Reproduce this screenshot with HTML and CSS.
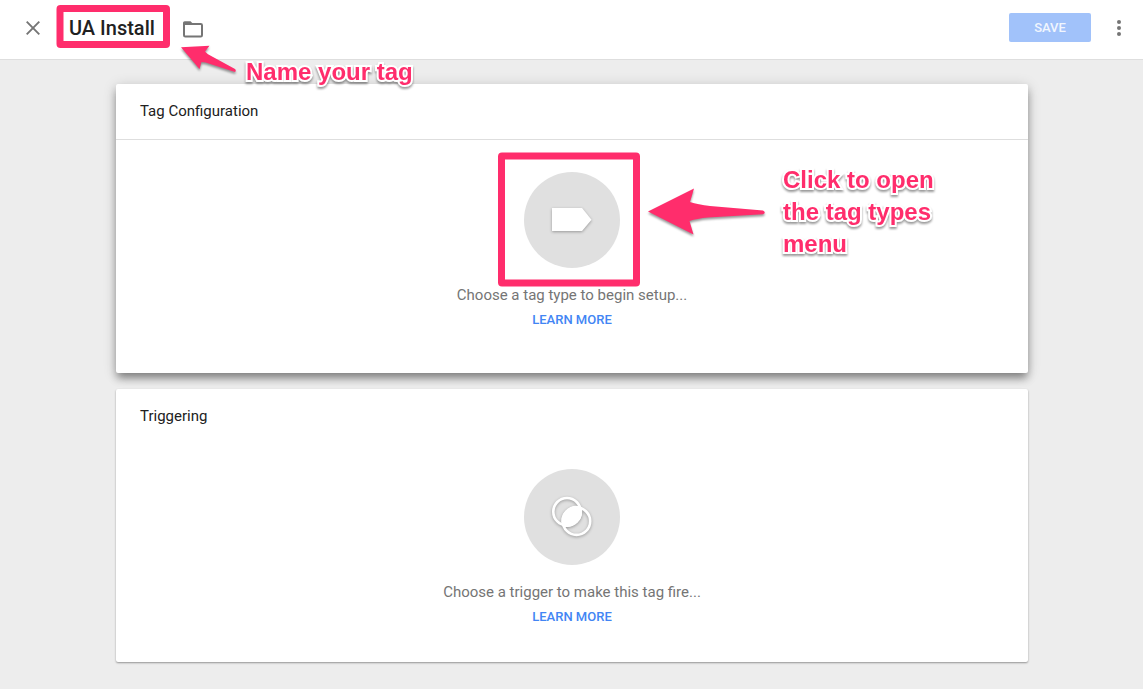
FILE: index.html
```html
<!DOCTYPE html>
<html lang="en">
<head>
<meta charset="utf-8">
<title>UA Install</title>
<link rel="stylesheet" href="styles.css">
</head>
<body>
<header class="topbar">
  <svg class="close" width="14" height="14" viewBox="0 0 14 14"><path d="M.7.7 13.3 13.3M13.3.7.7 13.3"/></svg>
  <h1 class="name">UA Install</h1>
  <svg class="folder" width="20" height="17" viewBox="0 0 20 17"><path class="folder-line" d="M1 2.9V14.2Q1 15.5 2.3 15.5H17.7Q19 15.5 19 14.2V4.3Q19 3 17.7 3H1"/><path class="folder-tab" d="M0 4V1.8Q0 .3 1.7.3H7.5L9.8 2.6V4Z"/></svg>
  <button class="save">SAVE</button>
  <svg class="more" width="4" height="16" viewBox="0 0 4 16"><circle cx="2" cy="2" r="2"/><circle cx="2" cy="8" r="2"/><circle cx="2" cy="14" r="2"/></svg>
</header>
<main class="content">
  <section class="card card-config">
    <h2 class="card-title card-title-ruled">Tag Configuration</h2>
    <div class="empty">
      <div class="disc"><svg class="glyph" width="40" height="24" viewBox="0 0 40 24"><path d="M0 0H30L39.500 11.700 30 23H0Z"/></svg></div>
      <p class="hint">Choose a tag type to begin setup...</p>
      <a class="learn">LEARN MORE</a>
    </div>
  </section>
  <section class="card card-trigger">
    <h2 class="card-title">Triggering</h2>
    <div class="empty empty-trigger">
      <div class="disc"><svg class="glyph" width="40" height="40" viewBox="0 0 40 40"><circle class="ring" cx="15" cy="14.700" r="13.700"/><circle class="ring" cx="24.500" cy="24.200" r="13.700"/><path d="M29.1 9.750A15 15 0 0 1 10.3 29.15A15 15 0 0 1 29.1 9.750Z"/></svg></div>
      <p class="hint">Choose a trigger to make this tag fire...</p>
      <a class="learn">LEARN MORE</a>
    </div>
  </section>
</main>
<svg class="marks" width="1143" height="689" viewBox="0 0 1143 689">
  <rect class="frame" x="60" y="8.5" width="106.500" height="36" rx=".5"/>
  <rect class="frame" x="501.500" y="156" width="135" height="127" rx=".5"/>
  <path class="arrow" d="M181 47.200 209.500 45.700 205 51.500Q207 54 213 57L235 69Q236.500 70.500 235 72L211 64.300Q205 62 201.500 62L199.500 69Z"/>
  <path class="arrow" d="M648 211.500 694 188.500 690 202Q698 204.500 710 206L763 210.500Q766.500 212.500 763 214.200L708 217.500Q697 218.500 689.500 221L693.500 234.500Z"/>
</svg>
<p class="note note-name">Name your tag</p>
<p class="note note-click">Click to open<br>the tag types<br>menu</p>
</body>
</html>
```
FILE: styles.css
```css
* { box-sizing: border-box; }
body {
  margin: 0;
  height: 689px;
  overflow: hidden;
  background: #ededed;
  color: #212121;
  font-family: Roboto, "Liberation Sans", sans-serif;
}
h1, h2, p { margin: 0; font-weight: 400; }
.topbar {
  display: flex;
  align-items: center;
  height: 60px;
  padding: 0 22px 4px 26px;
  background: #fff;
  border-bottom: 1px solid #dedede;
}
.close { fill: none; stroke: #757575; stroke-width: 1.9; }
.name {
  width: 114px;
  margin-left: 29px;
  font-size: 20px;
  font-weight: 500;
  line-height: 28px;
  white-space: nowrap;
}
.folder { margin-top: 3px; }
.folder-line { fill: none; stroke: #757575; stroke-width: 2; }
.folder-tab { fill: #757575; }
.save {
  width: 82px;
  height: 29px;
  margin-left: auto;
  padding: 0;
  border: 0;
  border-radius: 2px;
  background: #a1c2fa;
  color: #f1f6fe;
  font: 500 13px/29px Roboto, sans-serif;
}
.more { margin-left: 26px; fill: #757575; }
.content {
  display: flex;
  flex-direction: column;
  gap: 16px;
  width: 912px;
  margin: 24px 0 0 116px;
}
.card { position: relative; background: #fff; border-radius: 2px; }
.card-config {
  height: 289px;
  box-shadow: 0 6px 8px -1px rgba(0, 0, 0, .4), 0 2px 14px rgba(0, 0, 0, .16);
}
.card-trigger {
  height: 273px;
  box-shadow: 0 1px 2px rgba(0, 0, 0, .38);
}
.card-title {
  height: 55px;
  padding-left: 24px;
  font-size: 15px;
  line-height: 54px;
}
.card-title-ruled { height: 56px; border-bottom: 1px solid #dedede; }
.empty {
  display: flex;
  flex-direction: column;
  align-items: center;
  padding-top: 32px;
}
.empty-trigger { padding-top: 25px; }
.disc {
  display: flex;
  align-items: center;
  justify-content: center;
  width: 96px;
  height: 96px;
  border-radius: 50%;
  background: #e0e0e0;
}
.glyph {
  overflow: visible;
  fill: #fff;
  filter: drop-shadow(0 1.5px 1.5px rgba(0, 0, 0, .32));
}
.ring { fill: none; stroke: #fff; stroke-width: 2.6; }
.hint {
  margin-top: 17px;
  color: #757575;
  font-size: 15px;
  line-height: 20px;
}
.learn {
  margin-top: 6px;
  color: #4285f4;
  font-size: 13px;
  font-weight: 500;
  line-height: 18px;
}
.marks { position: absolute; left: 0; top: 0; }
.frame { fill: none; stroke: #ff2d6c; stroke-width: 7; stroke-linejoin: round; }
.arrow { fill: #ff2d6c; filter: drop-shadow(0 2px 1px rgba(0, 0, 0, .4)); }
.note {
  position: absolute;
  color: #ff2d6c;
  font: 700 24px/32px "Liberation Sans", sans-serif;
  white-space: nowrap;
  -webkit-text-stroke: 4px #fff;
  paint-order: stroke fill;
  stroke-linejoin: round;
  filter: drop-shadow(0 2px 1px rgba(0, 0, 0, .4));
}
.note-name { left: 246px; top: 56px; }
.note-click { left: 783px; top: 164px; }
```
